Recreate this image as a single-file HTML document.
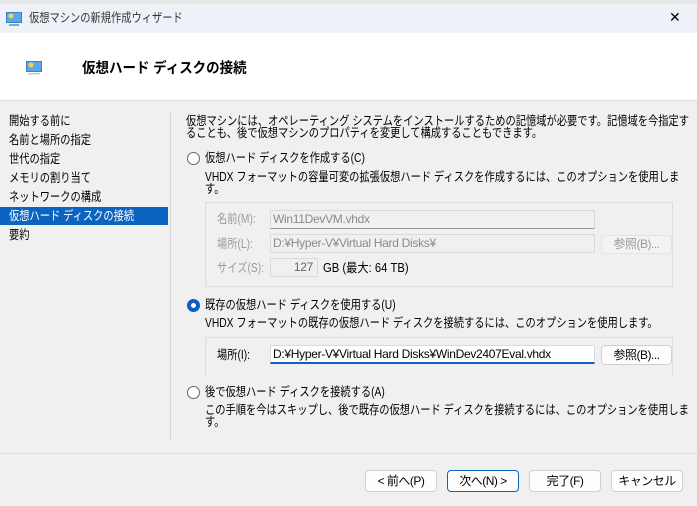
<!DOCTYPE html>
<html><head><meta charset="utf-8"><style>
*{margin:0;padding:0;box-sizing:border-box}
body{width:697px;height:506px;overflow:hidden;background:#f0f0f0;font-family:"Liberation Sans","Noto Sans CJK JP",sans-serif;font-size:12.5px;color:#000;position:relative}
.a{position:absolute;white-space:nowrap;line-height:12px;transform:scaleX(0.82);transform-origin:0 0}
.nav{position:absolute;left:0;width:168px;height:18px;padding-left:9px;line-height:18px}
.nav span{display:inline-block;transform:scaleX(0.82);transform-origin:0 0;white-space:nowrap}
.btn{position:absolute;height:22px;border:1px solid #d0d0d0;border-radius:4px;background:#fdfdfd;text-align:center;line-height:20px;white-space:nowrap;letter-spacing:-0.5px;font-size:12px}
.inp{position:absolute;height:19px;border:1px solid #dadada;background:#f0f0f0;color:#8a8a8a;padding-left:2px;line-height:17px;white-space:nowrap;letter-spacing:-0.3px;overflow:hidden;font-size:12px}
.g{color:#9a9a9a}
.radio{position:absolute;width:13px;height:13px;border:1px solid #666;border-radius:50%;background:#fff}
</style></head><body>
<div style="position:absolute;left:0;top:0;width:697px;height:4px;background:#e6e6e6"></div>
<div style="position:absolute;left:0;top:4px;width:697px;height:29px;background:#eef2f8"></div>
<svg style="position:absolute;left:6px;top:12px" width="16" height="14"><rect x="0.5" y="0.5" width="15" height="10" fill="#5aa9e6" stroke="#3a7fc0"/><circle cx="5" cy="4" r="2.5" fill="#f7d24a"/><rect x="3" y="12" width="10" height="2" fill="#7aa8d0"/></svg>
<div class="a" style="left:29px;top:12px;color:#333">仮想マシンの新規作成ウィザード</div>
<div class="a" style="left:669px;top:11px;font-size:14px;transform:none">✕</div>
<div style="position:absolute;left:0;top:33px;width:697px;height:68px;background:#fff;border-bottom:1px solid #ddd"></div>
<svg style="position:absolute;left:26px;top:61px" width="16" height="14"><rect x="0.5" y="0.5" width="15" height="10" fill="#5aa9e6" stroke="#3a7fc0"/><circle cx="5" cy="4" r="2.5" fill="#f7d24a"/><rect x="2" y="12" width="12" height="1.5" fill="#bcd"/></svg>
<div class="a" style="left:82px;top:62px;font-size:14.5px;font-weight:bold;line-height:14px;transform:scaleX(0.93)">仮想ハード ディスクの接続</div>

<div class="nav" style="top:112px"><span>開始する前に</span></div>
<div class="nav" style="top:131px"><span>名前と場所の指定</span></div>
<div class="nav" style="top:150px"><span>世代の指定</span></div>
<div class="nav" style="top:169px"><span>メモリの割り当て</span></div>
<div class="nav" style="top:188px"><span>ネットワークの構成</span></div>
<div class="nav" style="top:207px;background:#0a64c0;color:#fff"><span>仮想ハード ディスクの接続</span></div>
<div class="nav" style="top:226px"><span>要約</span></div>
<div style="position:absolute;left:170px;top:112px;width:1px;height:328px;background:#d6d6d6"></div>

<div class="a" style="left:186px;top:115px">仮想マシンには、オペレーティング システムをインストールするための記憶域が必要です。記憶域を今指定す</div>
<div class="a" style="left:186px;top:127px">ることも、後で仮想マシンのプロパティを変更して構成することもできます。</div>
<div class="radio" style="left:187px;top:152px"></div>
<div class="a" style="left:205px;top:152px">仮想ハード ディスクを作成する(C)</div>
<div class="a" style="left:205px;top:171px">VHDX フォーマットの容量可変の拡張仮想ハード ディスクを作成するには、このオプションを使用しま</div>
<div class="a" style="left:205px;top:183px">す。</div>
<div style="position:absolute;left:205px;top:202px;width:468px;height:85px;border:1px solid #dcdcdc"></div>
<div class="a g" style="left:217px;top:213px">名前(M):</div>
<div class="inp" style="left:270px;top:210px;width:325px;border-bottom-color:#999">Win11DevVM.vhdx</div>
<div class="a g" style="left:217px;top:238px">場所(L):</div>
<div class="inp" style="left:270px;top:234px;width:325px">D:¥Hyper-V¥Virtual Hard Disks¥</div>
<div class="btn" style="left:601px;top:235px;width:71px;height:19px;line-height:17px;background:#f3f3f3;border-color:#e4e4e4;color:#999">参照(B)...</div>
<div class="a g" style="left:217px;top:262px">サイズ(S):</div>
<div class="inp" style="left:270px;top:258px;width:48px;text-align:right;padding-right:4px;color:#666">127</div>
<div class="a" style="left:323px;top:262px;transform:scaleX(0.9)">GB (最大: 64 TB)</div>

<div class="radio" style="left:187px;top:299px;border:4px solid #0a5fb8"></div>
<div class="a" style="left:205px;top:299px">既存の仮想ハード ディスクを使用する(U)</div>
<div class="a" style="left:205px;top:317px">VHDX フォーマットの既存の仮想ハード ディスクを接続するには、このオプションを使用します。</div>
<div style="position:absolute;left:205px;top:337px;width:468px;height:40px;border:1px solid #dcdcdc;border-bottom:none"></div>
<div class="a" style="left:217px;top:349px">場所(I):</div>
<div class="inp" style="left:270px;top:345px;width:325px;background:#fff;color:#000;border-bottom:2px solid #0a64c0">D:¥Hyper-V¥Virtual Hard Disks¥WinDev2407Eval.vhdx</div>
<div class="btn" style="left:601px;top:345px;width:71px;height:20px;line-height:18px">参照(B)...</div>

<div class="radio" style="left:187px;top:386px"></div>
<div class="a" style="left:205px;top:386px">後で仮想ハード ディスクを接続する(A)</div>
<div class="a" style="left:205px;top:404px">この手順を今はスキップし、後で既存の仮想ハード ディスクを接続するには、このオプションを使用しま</div>
<div class="a" style="left:205px;top:416px">す。</div>

<div style="position:absolute;left:0;top:453px;width:697px;height:1px;background:#dcdcdc"></div>
<div class="btn" style="left:365px;top:470px;width:72px">&lt; 前へ(P)</div>
<div class="btn" style="left:447px;top:470px;width:72px;border-color:#0a64c0">次へ(N) &gt;</div>
<div class="btn" style="left:529px;top:470px;width:72px">完了(F)</div>
<div class="btn" style="left:611px;top:470px;width:72px">キャンセル</div>
</body></html>
